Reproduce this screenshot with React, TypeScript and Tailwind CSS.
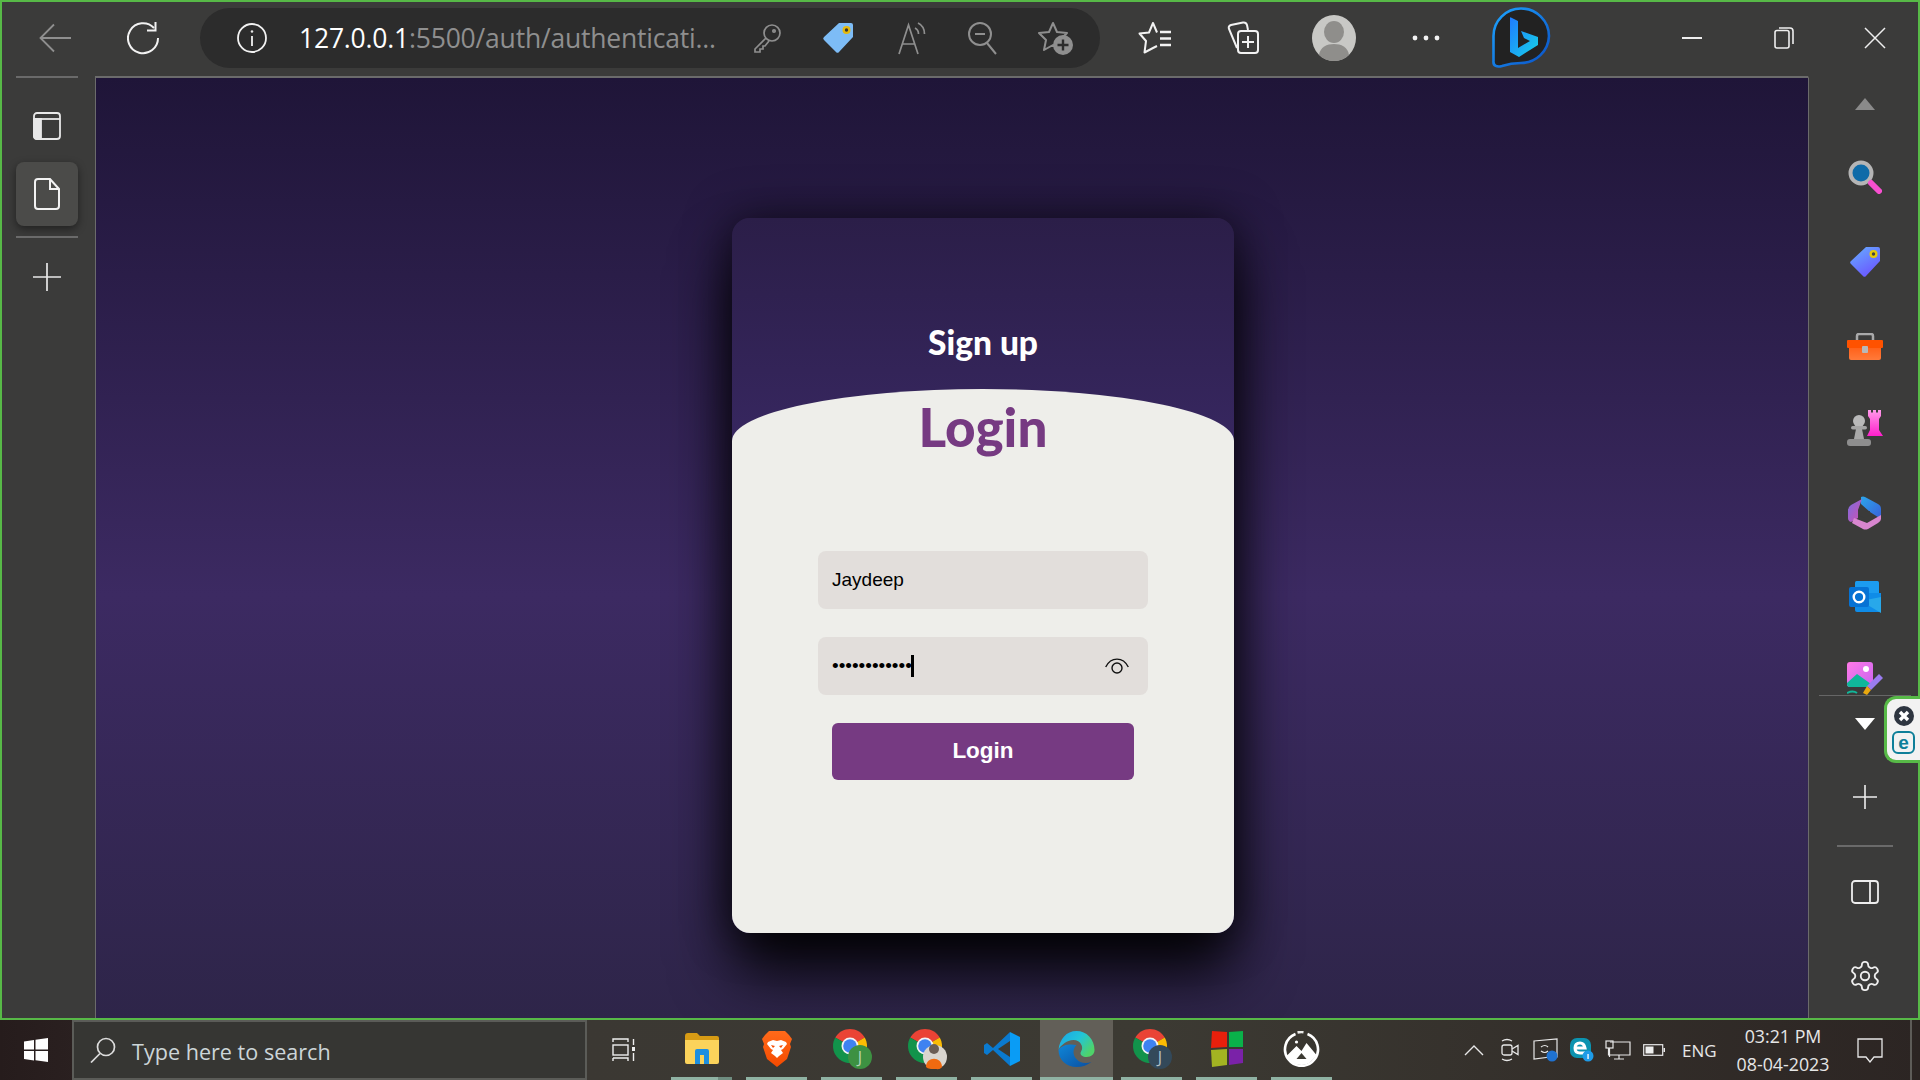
import React from "react";

const W = "#f2f2f2";
const G = "#8f8f8f";

function Star({ color }: { color: string }) {
  return <path d="M15 3 L19 12 L29 13 L22 20 L24 30 L15 25 L6 30 L8 20 L1 13 L11 12 Z" fill="none" stroke={color} strokeWidth="2" strokeLinejoin="round" />;
}

function Chrome({ badge, children }: { badge: string; children?: React.ReactNode }) {
  return (
    <svg width="46" height="46" viewBox="0 0 46 46" className="overflow-visible">
      <g transform="translate(4 3)">
        <path d="M17 17 L2.28 8.5 A17 17 0 0 1 31.72 8.5Z" fill="#ea4335" />
        <path d="M17 17 L31.72 8.5 A17 17 0 0 1 17 34Z" fill="#fbbc04" />
        <path d="M17 17 L17 34 A17 17 0 0 1 2.28 8.5Z" fill="#12934b" />
        <circle cx="17" cy="17" r="8.5" fill="#f4f4f4" />
        <circle cx="17" cy="17" r="6.8" fill="#3f82f1" />
      </g>
      <circle cx="31" cy="31" r="12" fill={badge} />
      {children}
    </svg>
  );
}

function App2({ w, ml, bar, bg, children }: { w: string; ml: string; bar: string; bg?: string; children: React.ReactNode }) {
  return (
    <div className={`flex h-full flex-col ${w} ${ml} ${bg ?? ""}`}>
      <div className="flex flex-1 items-center justify-center">{children}</div>
      <div className={`h-[3px] w-full ${bar}`} />
    </div>
  );
}

export default function App() {
  return (
    <div className="flex h-[1080px] w-[1920px] flex-col overflow-hidden bg-[#3b3b3a] font-['Open_Sans',sans-serif]">
      <div className="flex h-[1020px] flex-col border-2 border-[#57b947] bg-[#3b3b3a]">
        {/* Toolbar */}
        <div className="flex h-[74px] shrink-0 items-center pb-[2px]">
          <svg className="ml-[36px]" width="34" height="30" viewBox="0 0 34 30" fill="none" stroke={G} strokeWidth="1.8">
            <path d="M33 15H3M16 1.5 L2.5 15 L16 28.5" />
          </svg>
          <svg className="ml-[55px]" width="34" height="34" viewBox="0 0 34 34" fill="none" stroke={W} strokeWidth="2">
            <path d="M27 7 A15 15 0 1 0 31 17" />
            <path d="M28.5 1V9.5H20" />
          </svg>
          <div className="ml-[39px] flex h-[60px] w-[900px] items-center rounded-[30px] bg-[#2c2c2c]">
            <svg className="ml-[37px]" width="30" height="30" viewBox="0 0 30 30" fill="none" stroke={W} strokeWidth="1.8">
              <circle cx="15" cy="15" r="14" />
              <path d="M15 13V23" />
              <circle cx="15" cy="8.5" r="1" fill={W} strokeWidth="0.5" />
            </svg>
            <div className="ml-[32px] w-[416px] whitespace-nowrap text-[26.5px] leading-none tracking-[-0.2px] text-[#8f8f8f]">
              <span className="text-white">127.0.0.1</span>:5500/auth/authenticati...
            </div>
            <svg className="ml-[37px]" width="30" height="30" viewBox="0 0 30 30" fill="none" stroke={G} strokeWidth="1.7">
              <circle cx="20" cy="10" r="8" />
              <circle cx="22" cy="8" r="1.2" />
              <path d="M14 15 L3 26 V29 H8 V26 H11 V23 H13 L17 18" />
            </svg>
            <svg className="ml-[40px]" width="32" height="32" viewBox="0 0 32 32">
              <path d="M17 1 H29 A2 2 0 0 1 31 3 V15 L17 30 A2 2 0 0 1 14 30 L2 18 A2 2 0 0 1 2 15 Z" fill="#7dbcf6" />
              <circle cx="24.5" cy="8" r="4" fill="#e5b90c" />
              <circle cx="24.5" cy="8" r="1.7" fill="#333" />
            </svg>
            <svg className="ml-[43px]" width="32" height="34" viewBox="0 0 32 34" fill="none" stroke={G} strokeWidth="1.7">
              <path d="M2 33 L11.5 4 L21 33 M5.5 23H17.5" />
              <path d="M18 7 C20 8 21.5 10 21.5 13 M21 2 C25 4 27.5 8 27.5 13" />
            </svg>
            <svg className="ml-[39px]" width="30" height="34" viewBox="0 0 30 34" fill="none" stroke={G} strokeWidth="2">
              <circle cx="12" cy="13" r="11" />
              <path d="M7 13H17M19 22 L28 33" />
            </svg>
            <svg className="ml-[40px]" width="36" height="36" viewBox="0 0 36 36">
              <Star color={G} />
              <circle cx="25" cy="25" r="10" fill={G} />
              <path d="M25 19.5V30.5M19.5 25H30.5" stroke="#2c2c2c" strokeWidth="2.4" />
            </svg>
          </div>
          <svg className="ml-[38px]" width="36" height="34" viewBox="0 0 36 34" fill="none" stroke={W} strokeWidth="2" strokeLinejoin="round">
            <path d="M19 11.5 L15 2 L11 11.5 L1.5 12.5 L8 20 L6.5 31.5 L15 27 L19 25" />
            <path d="M22 11H33M22 17.5H33M22 24H33" strokeWidth="2.4" />
          </svg>
          <svg className="ml-[52px]" width="34" height="34" viewBox="0 0 34 34" fill="none" stroke={W} strokeWidth="2">
            <path d="M11 27 L3 8 Q2 5 5 4 L17 1.5 Q20 1 21 4 L22 9" />
            <rect x="12" y="10" width="20" height="22" rx="3" />
            <path d="M22 15V27M16 21H28" />
          </svg>
          <svg className="ml-[52px]" width="44" height="46" viewBox="0 0 44 46">
            <ellipse cx="22" cy="23" rx="22" ry="23" fill="#c8c8c5" />
            <ellipse cx="22" cy="17" rx="10" ry="11" fill="#8f8e8b" />
            <path d="M7 40 C8 32 15 29 22 29 C29 29 36 32 37 40 C33 44 28 46 22 46 C16 46 11 44 7 40Z" fill="#8f8e8b" />
          </svg>
          <svg className="ml-[56px]" width="28" height="8" viewBox="0 0 28 8" fill={W}>
            <circle cx="3" cy="4" r="2.4" /><circle cx="14" cy="4" r="2.4" /><circle cx="25" cy="4" r="2.4" />
          </svg>
          <svg className="ml-[51px]" width="60" height="62" viewBox="0 0 60 62">
            <defs>
              <linearGradient id="bb" x1="0" y1="0" x2="1" y2="1"><stop offset="0" stopColor="#1ea5ff" /><stop offset="1" stopColor="#0a4fc4" /></linearGradient>
              <linearGradient id="bl" x1="0" y1="0" x2="1" y2="1"><stop offset="0" stopColor="#1f7bff" /><stop offset="1" stopColor="#17d2e8" /></linearGradient>
            </defs>
            <path d="M30 1.5 A28 27.5 0 0 1 58 29 A28 28 0 0 1 30 56 C23 56 17 57 11 59 C6 60.5 2 59 2.5 54 L2.5 29 A27.5 27.5 0 0 1 30 1.5Z" fill="#222" stroke="url(#bb)" strokeWidth="2.6" />
            <path d="M19 11 Q19 10 20 10.5 L27 14 V41 L39 34 L33 31 L30 24 L47 30 V38 L28 50 L19 45 Z" fill="url(#bl)" />
          </svg>
          <div className="ml-[131px] h-[2px] w-[20px] bg-[#eee]" />
          <svg className="ml-[72px]" width="20" height="22" viewBox="0 0 20 22" fill="none" stroke="#eee" strokeWidth="1.6">
            <rect x="1" y="3.5" width="14" height="17.5" rx="2" />
            <path d="M5 1H16Q19 1 19 4V17" />
          </svg>
          <svg className="ml-[70px]" width="22" height="22" viewBox="0 0 22 22" fill="none" stroke="#eee" strokeWidth="1.5">
            <path d="M1 1 L21 21 M21 1 L1 21" />
          </svg>
        </div>
        {/* Body */}
        <div className="flex min-h-0 flex-1">
          <div className="flex w-[93px] shrink-0 flex-col items-start pl-[14px]">
            <div className="h-[2px] w-[62px] bg-[#6a6a6a]" />
            <svg className="ml-[17px] mt-[34px]" width="28" height="28" viewBox="0 0 28 28" fill="none" stroke="#e8e8e8" strokeWidth="1.8">
              <rect x="1" y="1" width="26" height="26" rx="3" />
              <path d="M1 7H27" />
              <path d="M1 7H8V27H4Q1 27 1 24Z" fill="#e8e8e8" />
            </svg>
            <div className="mt-[22px] flex h-[64px] w-[62px] items-center justify-center rounded-lg bg-[#4b4b49] shadow-[0_3px_8px_rgba(0,0,0,0.45)]">
              <svg width="26" height="32" viewBox="0 0 26 32" fill="none" stroke={W} strokeWidth="2">
                <path d="M4 1H16L25 11V28Q25 31 22 31H4Q1 31 1 28V4Q1 1 4 1Z" />
                <path d="M16 1V11H25" />
              </svg>
            </div>
            <div className="mt-[10px] h-[2px] w-[62px] bg-[#6a6a6a]" />
            <svg className="ml-[17px] mt-[25px]" width="28" height="28" viewBox="0 0 28 28" stroke="#e8e8e8" strokeWidth="1.7">
              <path d="M14 0V28M0 14H28" />
            </svg>
          </div>

          {/* Page */}
          <div className="min-w-0 flex-1 overflow-hidden border-l border-t-2 border-[#6b6b6b] bg-[linear-gradient(180deg,#1f1538_0%,#3c2a62_55%,#2e2549_100%)] pl-[636px] pt-[140px]">
            <div className="flex h-[715px] w-[502px] flex-col rounded-[18px] bg-[linear-gradient(180deg,#2b1e48_0%,#372760_32%)] shadow-[0_0_45px_rgba(0,0,0,0.6),0_40px_60px_rgba(0,0,0,0.9)]">
              <div className="flex h-[171px] shrink-0 items-start justify-center pt-[100px] font-['Lato',sans-serif] text-[33.5px] font-black leading-[48px] text-white">
                Sign up
              </div>
              <div className="flex flex-1 flex-col items-center bg-[#eeeeea] [border-radius:251px_251px_18px_18px/52px_52px_18px_18px]">
                <div className="h-[92px] font-['Lato',sans-serif] text-[53px] font-black leading-[75px] text-[#763a82]">Login</div>
                <div className="mt-[70px] flex h-[58px] w-[330px] items-center rounded-lg bg-[#e2dedb] pl-[14px] font-['Liberation_Sans',sans-serif] text-[19px] text-black">
                  Jaydeep
                </div>
                <div className="mt-[28px] flex h-[58px] w-[330px] items-center rounded-lg bg-[#e2dedb] pl-[14px] pr-[19px] font-['Liberation_Sans',sans-serif] text-[19px] text-black">
                  <span className="tracking-[0px]">••••••••••••</span>
                  <span className="ml-[-1px] h-[22px] w-[3px] bg-black" />
                  <svg className="ml-auto" width="24" height="16" viewBox="0 0 24 16" fill="none" stroke="#111" strokeWidth="1.4">
                    <path d="M0.7 9 C6 -1.5 18 -1.5 23.3 9" />
                    <circle cx="12" cy="10" r="5" />
                  </svg>
                </div>
                <div className="mt-[28px] flex h-[57px] w-[302px] items-center justify-center rounded-md bg-[#763a82] pb-[2px] font-['Liberation_Sans',sans-serif] text-[22.5px] font-bold text-white">
                  Login
                </div>
              </div>
            </div>
          </div>

          {/* Right sidebar */}
          <div className="relative flex w-[110px] shrink-0 flex-col items-center border-l border-t-2 border-[#6b6b6b] border-t-[#3b3b3a] pl-[2px]">
            <svg className="mt-[20px]" width="20" height="12" viewBox="0 0 20 12"><path d="M10 0 L20 12H0Z" fill="#8a8a8a" /></svg>
            <svg className="mt-[50px]" width="34" height="34" viewBox="0 0 34 34">
              <circle cx="13" cy="13" r="10.5" fill="#0e6ba8" stroke="#b5b5b5" strokeWidth="4" />
              <path d="M23 23 L31 31" stroke="#f84fd0" strokeWidth="6" strokeLinecap="round" />
            </svg>
            <svg className="mt-[51px]" width="32" height="34" viewBox="0 0 32 32">
              <defs><linearGradient id="tg" x1="0" y1="0" x2="0.6" y2="1"><stop offset="0" stopColor="#66b0ff" /><stop offset="1" stopColor="#6a58ff" /></linearGradient></defs>
              <path d="M17 1 H29 A2 2 0 0 1 31 3 V15 L17 30 A2 2 0 0 1 14 30 L2 18 A2 2 0 0 1 2 15 Z" fill="url(#tg)" />
              <circle cx="24.5" cy="8" r="4" fill="#e5c90c" />
              <circle cx="24.5" cy="8" r="1.7" fill="#444" />
            </svg>
            <svg className="mt-[54px]" width="36" height="28" viewBox="0 0 36 28">
              <defs><linearGradient id="tb" x1="0" y1="0" x2="0" y2="1"><stop offset="0" stopColor="#ff5a10" /><stop offset="1" stopColor="#ff7a3a" /></linearGradient></defs>
              <path d="M10 7V3Q10 1 12 1H24Q26 1 26 3V7" fill="none" stroke="#aaa" strokeWidth="2.5" />
              <rect x="2" y="11" width="32" height="16" rx="2" fill="url(#tb)" />
              <rect x="0" y="7" width="36" height="8" rx="1" fill="#ff5200" />
              <rect x="15" y="13" width="6" height="7" rx="1" fill="#b8b8b8" />
            </svg>
            <svg className="mt-[49px]" width="36" height="36" viewBox="0 0 36 36">
              <defs><linearGradient id="rk" x1="0" y1="0" x2="0" y2="1"><stop offset="0" stopColor="#ff9aea" /><stop offset="1" stopColor="#ff1ecb" /></linearGradient></defs>
              <path d="M21 0H24V2.5H26V0H29V2.5H31V0H34V6L32 9V20L36 26H20L23 20V9L21 6Z" fill="url(#rk)" />
              <circle cx="12" cy="11" r="6" fill="#b9b9b9" />
              <rect x="4" y="16" width="16" height="3.5" rx="1.7" fill="#a5a5a5" />
              <path d="M9 19H15L17 29H7Z" fill="#a8a8a8" />
              <rect x="0" y="29" width="24" height="7" rx="3" fill="#8e8e8e" />
            </svg>
            <svg className="mt-[50px]" width="34" height="34" viewBox="0 0 34 34">
              <defs>
                <linearGradient id="c1" x1="0" y1="0" x2="1" y2="1"><stop offset="0" stopColor="#2ba6ec" /><stop offset="1" stopColor="#3a5fd8" /></linearGradient>
                <linearGradient id="c2" x1="0" y1="0" x2="1" y2="1"><stop offset="0" stopColor="#7a6ee0" /><stop offset="1" stopColor="#d04fb0" /></linearGradient>
              </defs>
              <path d="M13 1 Q15 0 17 1 L30 8 Q33 9.5 33 13 V23 L22 16 L13 8 Z" fill="url(#c1)" />
              <path d="M14 3 L3 9 Q0 11 0 14 V22 Q0 25 3 26 L10 22 V14 Z" fill="url(#c2)" />
              <path d="M6 22 L19 27 L33 19 V23 Q33 25 30 27 L20 33 Q17 34 15 33 L4 27Z" fill="#d886cf" />
              <path d="M22 15 V19 L16 22 L11 19 L17 16Z" fill="#3b3b3a" />
            </svg>
            <svg className="mt-[51px]" width="32" height="32" viewBox="0 0 32 32">
              <rect x="6" y="0" width="24" height="16" rx="1.5" fill="#1c9cf0" />
              <path d="M6 12H32V29Q32 31 30 31H8Q6 31 6 29Z" fill="#0f8ce8" />
              <path d="M12 20 L32 32 V16Z" fill="#28a8ea" />
              <rect x="0" y="6" width="20" height="20" rx="2" fill="#0672d4" />
              <circle cx="10" cy="16" r="5.3" fill="none" stroke="#fff" strokeWidth="2.4" />
            </svg>
            <div className="mt-[49px] h-[33px] overflow-hidden">
              <svg width="36" height="35" viewBox="0 0 36 35" className="block">
                <defs><linearGradient id="ic" x1="0" y1="0" x2="1" y2="1"><stop offset="0" stopColor="#ff7ae8" /><stop offset="1" stopColor="#c864f0" /></linearGradient></defs>
                <rect x="0" y="0" width="26" height="25" rx="3" fill="url(#ic)" />
                <circle cx="19" cy="7" r="3" fill="#fff" />
                <path d="M0 21 L10 12 L24 22 V24 Q24 25 22 25 H3 Q0 25 0 22Z" fill="#10b79a" />
                <path d="M0 31 Q6 28 10 31" fill="none" stroke="#10b79a" strokeWidth="2" />
                <path d="M20 24 L32 12 L36 16 L24 28Z" fill="#9a7cf0" />
                <path d="M16 31 L20 24 L24 28 L20 33 Z" fill="#e9a80f" />
              </svg>
            </div>
            <div className="h-px w-[92px] bg-[#666]" />
            <svg className="mt-[22px]" width="20" height="12" viewBox="0 0 20 12"><path d="M0 0H20L10 12Z" fill="#fff" /></svg>
            <svg className="mt-[53px]" width="28" height="28" viewBox="0 0 28 28" stroke="#eee" strokeWidth="1.6"><path d="M14 2V26M2 14H26" /></svg>
            <div className="mt-[34px] h-[2px] w-[56px] bg-[#6a6a6a]" />
            <svg className="mt-[33px]" width="28" height="24" viewBox="0 0 28 24" fill="none" stroke="#eee" strokeWidth="1.8">
              <rect x="1" y="1" width="26" height="22" rx="3" />
              <path d="M19 1V23" />
            </svg>
            <svg className="mt-[55px]" width="34" height="34" viewBox="0 0 24 24" fill="none" stroke="#eee" strokeWidth="1.3" strokeLinecap="round" strokeLinejoin="round">
              <path d="M12.22 2h-.44a2 2 0 0 0-2 2v.18a2 2 0 0 1-1 1.73l-.43.25a2 2 0 0 1-2 0l-.15-.08a2 2 0 0 0-2.73.73l-.22.38a2 2 0 0 0 .73 2.73l.15.1a2 2 0 0 1 1 1.72v.51a2 2 0 0 1-1 1.74l-.15.09a2 2 0 0 0-.73 2.73l.22.38a2 2 0 0 0 2.73.73l.15-.08a2 2 0 0 1 2 0l.43.25a2 2 0 0 1 1 1.73V20a2 2 0 0 0 2 2h.44a2 2 0 0 0 2-2v-.18a2 2 0 0 1 1-1.73l.43-.25a2 2 0 0 1 2 0l.15.08a2 2 0 0 0 2.73-.73l.22-.39a2 2 0 0 0-.73-2.73l-.15-.08a2 2 0 0 1-1-1.74v-.5a2 2 0 0 1 1-1.74l.15-.09a2 2 0 0 0 .73-2.73l-.22-.38a2 2 0 0 0-2.73-.73l-.15.08a2 2 0 0 1-2 0l-.43-.25a2 2 0 0 1-1-1.73V4a2 2 0 0 0-2-2z" />
              <circle cx="12" cy="12" r="3" />
            </svg>
            {/* ESET badge over the sidebar */}
            <div className="absolute right-[-2px] top-[618px] flex h-[67px] w-[36px] flex-col items-center justify-center gap-[5px] rounded-l-xl border-[3px] border-r-0 border-[#57b947] bg-[#f2f2f2]">
              <svg width="20" height="20" viewBox="0 0 20 20">
                <circle cx="10" cy="10" r="10" fill="#2e3540" />
                <path d="M6 6L14 14M14 6L6 14" stroke="#fff" strokeWidth="3.4" />
              </svg>
              <div className="flex h-[23px] w-[23px] items-center justify-center rounded-md border-2 border-[#0e7f99] font-['Liberation_Sans',sans-serif] text-[19px] font-bold leading-none text-[#0e7f99]">
                e
              </div>
            </div>
          </div>
        </div>
      </div>

      {/* Taskbar */}
      <div className="flex h-[60px] shrink-0 items-center bg-[linear-gradient(90deg,#261c1c_0%,#2a2020_4%,#3b3833_30%,#3c3a33_60%,#2c2523_100%)]">
        <div className="flex w-[72px] justify-center">
          <svg width="24" height="24" viewBox="0 0 24 24" fill="#fff">
            <path d="M0 3.5 L10 2 V11.5 H0Z M11.5 1.8 L24 0 V11.5 H11.5Z M0 13 H10 V22.5 L0 21Z M11.5 13 H24 V24 L11.5 22.3Z" />
          </svg>
        </div>
        <div className="flex h-full w-[515px] items-center border-2 border-[#5b5c58] bg-[#363633] pl-[16px]">
          <svg width="26" height="26" viewBox="0 0 26 26" fill="none" stroke="#dcdcdc" strokeWidth="1.7">
            <circle cx="16" cy="10" r="8.5" />
            <path d="M10 16.5 L1 25.5" />
          </svg>
          <span className="ml-[16px] mt-[3px] whitespace-nowrap text-[21.6px] leading-none text-[#ccd5d8]">Type here to search</span>
        </div>
        <svg className="ml-[25px]" width="23" height="24" viewBox="0 0 23 24" fill="none" stroke="#eee" strokeWidth="1.4">
          <path d="M1 4V1H16V4M1 20H16V23M1 23V20" />
          <rect x="1" y="7" width="15" height="10" />
          <rect x="20" y="9" width="3" height="4" fill="#eee" stroke="none" />
          <path d="M21.5 1V7M21.5 15V23" />
        </svg>
        <App2 w="w-[61px]" ml="ml-[36px]" bar="bg-[linear-gradient(90deg,#8fb2a3_0%,#8fb2a3_77%,#6f8d80_77%)]">
          <svg width="34" height="34" viewBox="0 0 34 34">
            <path d="M0 4Q0 1 3 1H12L15 4H32Q34 4 34 6V10H0Z" fill="#d79b14" />
            <path d="M0 8H34V30Q34 32 32 32H2Q0 32 0 30Z" fill="#fbd35b" />
            <path d="M10 32V19Q10 17 12 17H22Q24 17 24 19V32H19V23H15V32Z" fill="#1d8fe0" />
          </svg>
        </App2>
        <App2 w="w-[61px]" ml="ml-[14px]" bar="bg-[#8fb2a3]">
          <svg width="30" height="36" viewBox="0 0 30 36">
            <defs><linearGradient id="br" x1="0" y1="0" x2="0" y2="1"><stop offset="0" stopColor="#ff6a1a" /><stop offset="1" stopColor="#f54a00" /></linearGradient></defs>
            <path d="M7 0 H23 L27 4 L30 8 L28 13 L29 16 L25 28 L15 36 L5 28 L1 16 L2 13 L0 8 L3 4 Z" fill="url(#br)" />
            <path d="M6 11 L11 9 L15 10 L19 9 L24 11 L25 13 L21 18 L19 19 L21 22 L17 25 L15 27 L13 25 L9 22 L11 19 L9 18 L5 13Z" fill="#fff" />
            <path d="M9 14 L13 15 L11 17Z M21 14 L17 15 L19 17Z" fill="#f54a00" />
          </svg>
        </App2>
        <App2 w="w-[61px]" ml="ml-[14px]" bar="bg-[#8fb2a3]">
          <Chrome badge="#3d9142">
            <text x="31" y="37" textAnchor="middle" fontSize="16" fill="#b8d4b8" fontFamily="Open Sans, sans-serif">J</text>
          </Chrome>
        </App2>
        <App2 w="w-[61px]" ml="ml-[14px]" bar="bg-[#8fb2a3]">
          <Chrome badge="#d9d5cf">
            <circle cx="30" cy="23" r="5" fill="#6a5d55" />
            <path d="M22 41 C22 30 38 30 38 41 C36 44 33 43 31 43 C27 43 24 43 22 41Z" fill="#f06a10" />
          </Chrome>
        </App2>
        <App2 w="w-[61px]" ml="ml-[14px]" bar="bg-[#8fb2a3]">
          <svg width="36" height="36" viewBox="0 0 36 36">
            <path d="M26 1 L9 17 L3 12 L0 14 V22 L3 24 L9 19 L26 35 V26 L14 18 L26 10Z" fill="#0a7ad0" />
            <path d="M26 1 L36 6 V30 L26 35Z" fill="#0a9cf5" />
          </svg>
        </App2>
        <App2 w="w-[73px]" ml="ml-[8px]" bg="bg-[#625f58]" bar="bg-[#8fb2a3]">
          <svg width="37" height="36" viewBox="0 0 36 36">
            <defs>
              <linearGradient id="e1" x1="0" y1="0" x2="1" y2="0.6"><stop offset="0" stopColor="#1aa3e8" /><stop offset="0.55" stopColor="#22c4d8" /><stop offset="1" stopColor="#4fd36a" /></linearGradient>
              <linearGradient id="e2" x1="0" y1="0" x2="1" y2="1"><stop offset="0" stopColor="#0f86d8" /><stop offset="1" stopColor="#0b4fa0" /></linearGradient>
            </defs>
            <path d="M0 19 C0 29 8 36 18 36 C24 36 29 34 33 31 C27 33 21 32 18 28 C14 24 14 18 18 14 C12 13 4 13 0 19Z" fill="url(#e2)" />
            <path d="M18 0 C28 0 36 8 36 19 C36 23 33 26 28 26 C24 26 22 24 22 22 C23 19 24.5 18 23 14 C21 9 15 8 10 10 C5 12 1 16 0 19 C1 8 8 0 18 0Z" fill="url(#e1)" />
          </svg>
        </App2>
        <App2 w="w-[61px]" ml="ml-[8px]" bar="bg-[#8fb2a3]">
          <Chrome badge="#33495a">
            <text x="31" y="37" textAnchor="middle" fontSize="16" fill="#b4c0c8" fontFamily="Open Sans, sans-serif">J</text>
          </Chrome>
        </App2>
        <App2 w="w-[61px]" ml="ml-[14px]" bar="bg-[#8fb2a3]">
          <svg width="33" height="36" viewBox="0 0 33 36">
            <path d="M2 0 L17 1 V16 L1 17Z" fill="#e8200c" />
            <path d="M19 1 L33 0 V16 L19 16Z" fill="#0ab14a" />
            <path d="M1 19 L17 18 V34 L2 36Z" fill="#a3b422" />
            <path d="M19 18 L33 18 V32 L19 34Z" fill="#7a22a8" />
          </svg>
        </App2>
        <App2 w="w-[61px]" ml="ml-[14px]" bar="bg-[#8fb2a3]">
          <svg width="37" height="36" viewBox="0 0 36 36">
            <path d="M12 3 A16.5 16.5 0 1 0 24 3" fill="none" stroke="#fff" strokeWidth="2.6" />
            <path d="M14 1.5 A16.5 16.5 0 0 1 20 1.2" fill="none" stroke="#fff" strokeWidth="2.6" opacity="0.9" />
            <circle cx="13" cy="11" r="1.6" fill="#fff" />
            <path d="M3 25 L13 15 L18 20 L23 12 L33 24 Q27 34 18 34 Q8 34 3 25Z" fill="#fff" />
            <path d="M13 28 L18 22 L23 28 Z" fill="#3c3a33" />
          </svg>
        </App2>

        {/* Tray */}
        <svg className="ml-[132px]" width="20" height="12" viewBox="0 0 20 12" fill="none" stroke="#e8e8e8" strokeWidth="1.4"><path d="M1 11 L10 2 L19 11" /></svg>
        <svg className="ml-[17px]" width="18" height="24" viewBox="0 0 18 24" fill="none" stroke="#e8e8e8" strokeWidth="1.3">
          <path d="M1 3 Q6 0 11 3 M1 21 Q6 24 11 21" />
          <rect x="1" y="7" width="10" height="10" rx="2" />
          <path d="M11 11 L17 7.5 V16.5 L11 13" />
        </svg>
        <svg className="ml-[14px]" width="26" height="24" viewBox="0 0 26 24">
          <path d="M1 3 L24 0.8 V19 H17 L1 21Z M8 9 Q12 6 15 9 M15 13 Q12 16 8 13" fill="none" stroke="#e8e8e8" strokeWidth="1.2" />
          <circle cx="19" cy="18" r="5.5" fill="#1f72d0" />
        </svg>
        <svg className="ml-[11px]" width="24" height="24" viewBox="0 0 24 24">
          <rect x="0" y="0" width="21" height="20" rx="7" fill="#0c93b0" />
          <path d="M5 10 H15 Q14 5 10 5 Q5 5 5 10 Q5 15 10 15 H15" fill="none" stroke="#fff" strokeWidth="3" />
          <circle cx="18" cy="18" r="5.5" fill="#1e9be8" />
          <rect x="17.4" y="16" width="1.3" height="5" fill="#fff" />
        </svg>
        <svg className="ml-[11px]" width="26" height="20" viewBox="0 0 26 20" fill="none" stroke="#e8e8e8" strokeWidth="1.2">
          <path d="M5 2H25V15H3.5V8" />
          <rect x="1" y="1" width="7" height="7" />
          <path d="M4.5 8V17 M14 15V19M9 19H19" />
        </svg>
        <svg className="ml-[12px]" width="22" height="12" viewBox="0 0 22 12">
          <rect x="0.7" y="0.7" width="19" height="10.6" fill="none" stroke="#e8e8e8" strokeWidth="1.2" />
          <rect x="2.5" y="2.5" width="8" height="7" fill="#eee" />
          <rect x="20.5" y="4" width="1.5" height="4" fill="#e8e8e8" />
        </svg>
        <span className="ml-[17px] w-[33px] whitespace-nowrap text-[17px] leading-none text-[#e6e6e6]">ENG</span>
        <div className="ml-[20px] flex w-[96px] flex-col items-center gap-[8px] text-[17.8px] leading-[20px] text-[#e6e6e6]">
          <span>03:21 PM</span>
          <span>08-04-2023</span>
        </div>
        <svg className="ml-[26px]" width="26" height="25" viewBox="0 0 26 25" fill="none" stroke="#e8e8e8" strokeWidth="1.3">
          <path d="M1 1H25V19H17L13 24 L9 19H1Z" />
        </svg>
        <div className="ml-[27px] h-full w-[2px] bg-[#5e5c58]" />
      </div>
    </div>
  );
}
